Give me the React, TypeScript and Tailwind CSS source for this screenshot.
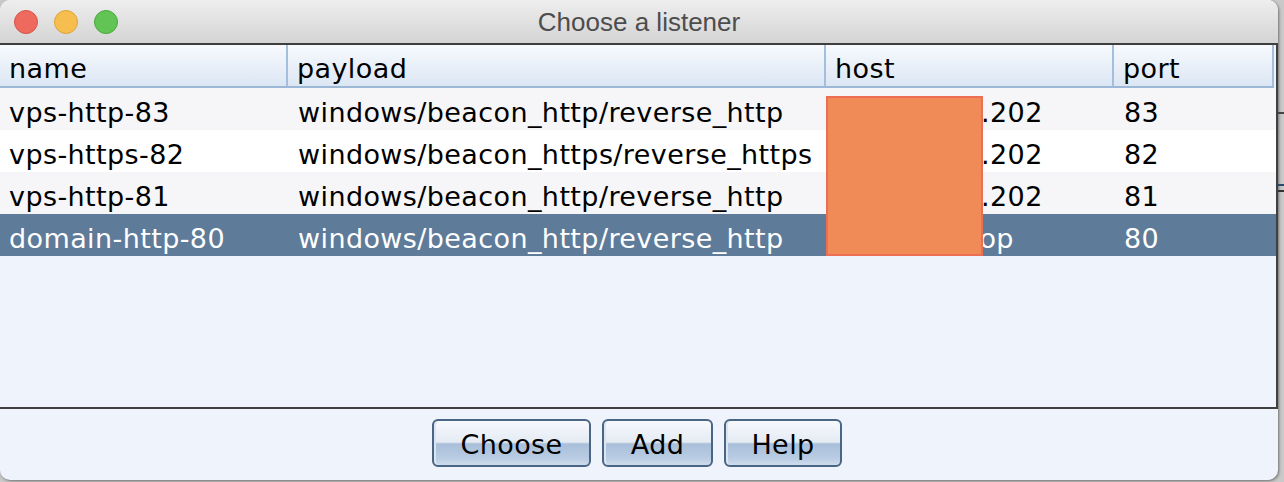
import React from "react";

const cols = [
  { key: "name", label: "name", w: "w-[288px]" },
  { key: "payload", label: "payload", w: "w-[538px]" },
  { key: "host", label: "host", w: "w-[288px]" },
  { key: "port", label: "port", w: "flex-1" },
];

const rows = [
  { name: "vps-http-83", payload: "windows/beacon_http/reverse_http", host: "123.45.67.202", port: "83", hostPad: "pl-[14px]" },
  { name: "vps-https-82", payload: "windows/beacon_https/reverse_https", host: "123.45.67.202", port: "82", hostPad: "pl-[14px]" },
  { name: "vps-http-81", payload: "windows/beacon_http/reverse_http", host: "123.45.67.202", port: "81", hostPad: "pl-[14px]" },
  { name: "domain-http-80", payload: "windows/beacon_http/reverse_http", host: "examples.top", port: "80", hostPad: "pl-[0px]" },
];

const font = "font-['DejaVu_Sans',_'Liberation_Sans',_sans-serif]";
const cell = "text-[27px] tracking-[0.4px] leading-none";

function AquaButton({ children, w }: { children: React.ReactNode; w: string }) {
  return (
    <button
      className={`${w} h-[48px] rounded-[6px] border-2 border-[#4b6584] bg-[linear-gradient(to_bottom,#f7f9fc_0%,#e4ebf3_48%,#a9bfda_52%,#b9cce2_85%,#cfdcec_100%)] ${cell} text-black flex items-center justify-center pt-[3px] shadow-[inset_2px_0_0_#dbe5f0]`}
    >
      {children}
    </button>
  );
}

export default function App() {
  return (
    <div className={`w-[1284px] h-[482px] bg-[#c9c9c9] relative overflow-hidden ${font}`}>
      {/* stuff behind the window */}
      <div className="absolute left-[1278px] top-[112px] w-[6px] h-[2px] bg-[#444]" />
      <div className="absolute left-[1278px] top-[184px] w-[6px] h-[2px] bg-[#2e4a6a]" />
      <div className="absolute left-[1278px] top-[190px] w-[6px] h-[2px] bg-[#333]" />

      <div className="w-[1278px] h-[480px] rounded-[10px] overflow-hidden flex flex-col bg-[#eff3fb] shadow-[1px_1px_3px_rgba(0,0,0,0.45)]">
        {/* title bar */}
        <div className="h-[45px] shrink-0 relative flex items-center justify-center bg-[linear-gradient(to_bottom,#eeeeee,#d4d4d4)] border-b-2 border-[#3e3e3e]">
          <div className="absolute left-[14px] top-[10px] flex gap-[16px]">
            <span className="w-[24px] h-[24px] rounded-full bg-[#ee6a5f] border border-[#d85448]" />
            <span className="w-[24px] h-[24px] rounded-full bg-[#f6be4f] border border-[#dea23b]" />
            <span className="w-[24px] h-[24px] rounded-full bg-[#61c454] border border-[#4ba83f]" />
          </div>
          <span className="font-['Liberation_Sans',_sans-serif] text-[26px] text-[#4d4d4d] pt-[1px]">
            Choose a listener
          </span>
        </div>

        {/* table pane */}
        <div className="h-[364px] shrink-0 relative flex flex-col border-r-2 border-b-2 border-[#404040] bg-[#eff3fb]">
          <div className="h-[43px] shrink-0 flex border-b-2 border-[#9db8d6] bg-[linear-gradient(to_bottom,#f7f9fd,#dce7f4)] mr-[2px]">
            {cols.map((c) => (
              <div
                key={c.key}
                className={`${c.w} h-full flex items-center pl-[9px] pt-[5px] ${cell} text-black border-r-2 border-[#a4bfdb]`}
              >
                {c.label}
              </div>
            ))}
          </div>
          {rows.map((r, i) => {
            const sel = i === 3;
            const bg = sel ? "bg-[#5e7b99] text-white" : i % 2 === 0 ? "bg-[#f6f6f8] text-black" : "bg-white text-black";
            return (
              <div key={r.name} className={`h-[42px] shrink-0 flex ${cell} ${bg}`}>
                <div className="w-[288px] flex items-center pl-[9px] pt-[6px]">{r.name}</div>
                <div className="w-[538px] flex items-center pl-[10px] pt-[6px] whitespace-nowrap">{r.payload}</div>
                <div className={`w-[288px] flex items-center ${r.hostPad} pt-[6px] whitespace-nowrap`}>{r.host}</div>
                <div className="flex-1 flex items-center pl-[10px] pt-[6px]">{r.port}</div>
              </div>
            );
          })}
          {/* redaction */}
          <div className="absolute left-[826px] top-[51px] w-[157px] h-[160px] bg-[#f08b57] border-2 border-[#ec6e55]" />
        </div>

        {/* buttons */}
        <div className="flex-1 flex items-start justify-center gap-[11px] pt-[10px] pr-[4px]">
          <AquaButton w="w-[159px]">Choose</AquaButton>
          <AquaButton w="w-[111px]">Add</AquaButton>
          <AquaButton w="w-[118px]">Help</AquaButton>
        </div>
      </div>
    </div>
  );
}
